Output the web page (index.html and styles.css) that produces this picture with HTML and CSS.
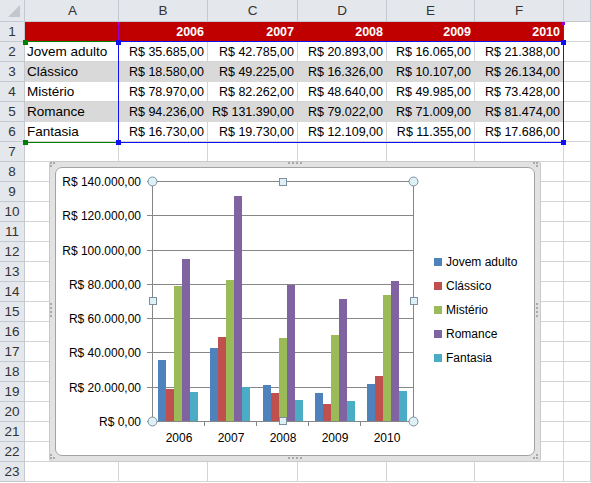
FILE: index.html
```html
<!DOCTYPE html>
<html lang="pt-BR">
<head>
<meta charset="utf-8">
<title>Vendas por gênero</title>
<link rel="stylesheet" href="styles.css">
</head>
<body>
<div class="sheet">
  <div class="row head">
    <div class="corner"><span class="tri"></span></div>
    <div class="ch ca">A</div><div class="ch cb">B</div><div class="ch cc">C</div><div class="ch cd">D</div><div class="ch ce">E</div><div class="ch cf">F</div><div class="ch cg"></div>
  </div>
  <div class="row">
    <div class="rh">1</div>
    <div class="cell ca red"></div><div class="cell cb red yr">2006</div><div class="cell cc red yr">2007</div><div class="cell cd red yr">2008</div><div class="cell ce red yr">2009</div><div class="cell cf red yr">2010</div><div class="cell cg"></div>
  </div>
  <div class="row">
    <div class="rh">2</div>
    <div class="cell ca">Jovem adulto</div><div class="cell cb num">R$ 35.685,00</div><div class="cell cc num">R$ 42.785,00</div><div class="cell cd num">R$ 20.893,00</div><div class="cell ce num">R$ 16.065,00</div><div class="cell cf num">R$ 21.388,00</div><div class="cell cg"></div>
  </div>
  <div class="row band">
    <div class="rh">3</div>
    <div class="cell ca">Clássico</div><div class="cell cb num">R$ 18.580,00</div><div class="cell cc num">R$ 49.225,00</div><div class="cell cd num">R$ 16.326,00</div><div class="cell ce num">R$ 10.107,00</div><div class="cell cf num">R$ 26.134,00</div><div class="cell cg"></div>
  </div>
  <div class="row">
    <div class="rh">4</div>
    <div class="cell ca">Mistério</div><div class="cell cb num">R$ 78.970,00</div><div class="cell cc num">R$ 82.262,00</div><div class="cell cd num">R$ 48.640,00</div><div class="cell ce num">R$ 49.985,00</div><div class="cell cf num">R$ 73.428,00</div><div class="cell cg"></div>
  </div>
  <div class="row band">
    <div class="rh">5</div>
    <div class="cell ca">Romance</div><div class="cell cb num">R$ 94.236,00</div><div class="cell cc num">R$ 131.390,00</div><div class="cell cd num">R$ 79.022,00</div><div class="cell ce num">R$ 71.009,00</div><div class="cell cf num">R$ 81.474,00</div><div class="cell cg"></div>
  </div>
  <div class="row">
    <div class="rh">6</div>
    <div class="cell ca">Fantasia</div><div class="cell cb num">R$ 16.730,00</div><div class="cell cc num">R$ 19.730,00</div><div class="cell cd num">R$ 12.109,00</div><div class="cell ce num">R$ 11.355,00</div><div class="cell cf num">R$ 17.686,00</div><div class="cell cg"></div>
  </div>
  <div class="row"><div class="rh">7</div><div class="cell ca"></div><div class="cell cb"></div><div class="cell cc"></div><div class="cell cd"></div><div class="cell ce"></div><div class="cell cf"></div><div class="cell cg"></div></div>
  <div class="row"><div class="rh">8</div><div class="cell ca"></div><div class="cell cb"></div><div class="cell cc"></div><div class="cell cd"></div><div class="cell ce"></div><div class="cell cf"></div><div class="cell cg"></div></div>
  <div class="row"><div class="rh">9</div><div class="cell ca"></div><div class="cell cb"></div><div class="cell cc"></div><div class="cell cd"></div><div class="cell ce"></div><div class="cell cf"></div><div class="cell cg"></div></div>
  <div class="row"><div class="rh">10</div><div class="cell ca"></div><div class="cell cb"></div><div class="cell cc"></div><div class="cell cd"></div><div class="cell ce"></div><div class="cell cf"></div><div class="cell cg"></div></div>
  <div class="row"><div class="rh">11</div><div class="cell ca"></div><div class="cell cb"></div><div class="cell cc"></div><div class="cell cd"></div><div class="cell ce"></div><div class="cell cf"></div><div class="cell cg"></div></div>
  <div class="row"><div class="rh">12</div><div class="cell ca"></div><div class="cell cb"></div><div class="cell cc"></div><div class="cell cd"></div><div class="cell ce"></div><div class="cell cf"></div><div class="cell cg"></div></div>
  <div class="row"><div class="rh">13</div><div class="cell ca"></div><div class="cell cb"></div><div class="cell cc"></div><div class="cell cd"></div><div class="cell ce"></div><div class="cell cf"></div><div class="cell cg"></div></div>
  <div class="row"><div class="rh">14</div><div class="cell ca"></div><div class="cell cb"></div><div class="cell cc"></div><div class="cell cd"></div><div class="cell ce"></div><div class="cell cf"></div><div class="cell cg"></div></div>
  <div class="row"><div class="rh">15</div><div class="cell ca"></div><div class="cell cb"></div><div class="cell cc"></div><div class="cell cd"></div><div class="cell ce"></div><div class="cell cf"></div><div class="cell cg"></div></div>
  <div class="row"><div class="rh">16</div><div class="cell ca"></div><div class="cell cb"></div><div class="cell cc"></div><div class="cell cd"></div><div class="cell ce"></div><div class="cell cf"></div><div class="cell cg"></div></div>
  <div class="row"><div class="rh">17</div><div class="cell ca"></div><div class="cell cb"></div><div class="cell cc"></div><div class="cell cd"></div><div class="cell ce"></div><div class="cell cf"></div><div class="cell cg"></div></div>
  <div class="row"><div class="rh">18</div><div class="cell ca"></div><div class="cell cb"></div><div class="cell cc"></div><div class="cell cd"></div><div class="cell ce"></div><div class="cell cf"></div><div class="cell cg"></div></div>
  <div class="row"><div class="rh">19</div><div class="cell ca"></div><div class="cell cb"></div><div class="cell cc"></div><div class="cell cd"></div><div class="cell ce"></div><div class="cell cf"></div><div class="cell cg"></div></div>
  <div class="row"><div class="rh">20</div><div class="cell ca"></div><div class="cell cb"></div><div class="cell cc"></div><div class="cell cd"></div><div class="cell ce"></div><div class="cell cf"></div><div class="cell cg"></div></div>
  <div class="row"><div class="rh">21</div><div class="cell ca"></div><div class="cell cb"></div><div class="cell cc"></div><div class="cell cd"></div><div class="cell ce"></div><div class="cell cf"></div><div class="cell cg"></div></div>
  <div class="row"><div class="rh">22</div><div class="cell ca"></div><div class="cell cb"></div><div class="cell cc"></div><div class="cell cd"></div><div class="cell ce"></div><div class="cell cf"></div><div class="cell cg"></div></div>
  <div class="row"><div class="rh">23</div><div class="cell ca"></div><div class="cell cb"></div><div class="cell cc"></div><div class="cell cd"></div><div class="cell ce"></div><div class="cell cf"></div><div class="cell cg"></div></div>
</div>

<!-- range highlights of the selected chart -->
<div class="hl-cat"></div>
<div class="hl-ser hl-ser-l"></div>
<div class="hl-ser hl-ser-r"></div>
<div class="hl-val"></div>
<span class="hnd hnd-g" style="left:23px;top:40px"></span>
<span class="hnd hnd-g" style="left:23px;top:140px"></span>
<span class="hnd hnd-b" style="left:116px;top:40px"></span>
<span class="hnd hnd-b" style="left:561px;top:40px"></span>
<span class="hnd hnd-b" style="left:116px;top:140px"></span>
<span class="hnd hnd-b" style="left:561px;top:140px"></span>
<span class="hnd hnd-p" style="left:117px;top:22px"></span>
<span class="hnd hnd-p" style="left:562px;top:22px"></span>

<div class="chart">
  <div class="chart-inner"></div>
  <svg class="chart-svg" width="492" height="301" viewBox="0 0 492 301">
    <g transform="translate(-50,-162)">
      <!-- frame grips -->
      <g fill="#a9a9a9">
        <rect x="289" y="163" width="2" height="2"/><rect x="293" y="163" width="2" height="2"/><rect x="297" y="163" width="2" height="2"/><rect x="301" y="163" width="2" height="2"/>
        <rect x="289" y="458" width="2" height="2"/><rect x="293" y="458" width="2" height="2"/><rect x="297" y="458" width="2" height="2"/><rect x="301" y="458" width="2" height="2"/>
        <rect x="51" y="304" width="2" height="2"/><rect x="51" y="308" width="2" height="2"/><rect x="51" y="312" width="2" height="2"/><rect x="51" y="316" width="2" height="2"/>
        <rect x="537" y="304" width="2" height="2"/><rect x="537" y="308" width="2" height="2"/><rect x="537" y="312" width="2" height="2"/><rect x="537" y="316" width="2" height="2"/>
        <rect x="51" y="163" width="2" height="2"/><rect x="54" y="163" width="2" height="2"/><rect x="51" y="166" width="2" height="2"/>
        <rect x="534" y="163" width="2" height="2"/><rect x="537" y="163" width="2" height="2"/><rect x="537" y="166" width="2" height="2"/>
        <rect x="51" y="455" width="2" height="2"/><rect x="51" y="458" width="2" height="2"/><rect x="54" y="458" width="2" height="2"/>
        <rect x="537" y="455" width="2" height="2"/><rect x="534" y="458" width="2" height="2"/><rect x="537" y="458" width="2" height="2"/>
      </g>
      <!-- gridlines -->
      <g stroke="#878787" stroke-width="1" shape-rendering="crispEdges">
        <line x1="148" y1="182.5" x2="414" y2="182.5"/>
        <line x1="148" y1="216.5" x2="414" y2="216.5"/>
        <line x1="148" y1="251.5" x2="414" y2="251.5"/>
        <line x1="148" y1="285.5" x2="414" y2="285.5"/>
        <line x1="148" y1="319.5" x2="414" y2="319.5"/>
        <line x1="148" y1="353.5" x2="414" y2="353.5"/>
        <line x1="148" y1="388.5" x2="414" y2="388.5"/>
      </g>
      <!-- bars -->
      <g fill="#4f81bd">
        <rect x="159" y="361" width="8" height="61"/><rect x="211" y="349" width="8" height="73"/><rect x="264" y="386" width="8" height="36"/><rect x="316" y="394" width="8" height="28"/><rect x="368" y="385" width="8" height="37"/>
      </g>
      <g fill="#c0504d">
        <rect x="167" y="390" width="8" height="32"/><rect x="219" y="338" width="8" height="84"/><rect x="272" y="394" width="8" height="28"/><rect x="324" y="405" width="8" height="17"/><rect x="376" y="377" width="8" height="45"/>
      </g>
      <g fill="#9bbb59">
        <rect x="175" y="287" width="8" height="135"/><rect x="227" y="281" width="8" height="141"/><rect x="280" y="339" width="8" height="83"/><rect x="332" y="336" width="8" height="86"/><rect x="384" y="296" width="8" height="126"/>
      </g>
      <g fill="#8064a2">
        <rect x="183" y="260" width="8" height="162"/><rect x="235" y="197" width="8" height="225"/><rect x="288" y="286" width="8" height="136"/><rect x="340" y="300" width="8" height="122"/><rect x="392" y="282" width="8" height="140"/>
      </g>
      <g fill="#4bacc6">
        <rect x="191" y="393" width="8" height="29"/><rect x="243" y="388" width="8" height="34"/><rect x="296" y="401" width="8" height="21"/><rect x="348" y="402" width="8" height="20"/><rect x="400" y="392" width="8" height="30"/>
      </g>
      <!-- axes -->
      <g stroke="#868686" stroke-width="1" shape-rendering="crispEdges">
        <line x1="148" y1="422.5" x2="414" y2="422.5"/>
        <line x1="153.5" y1="182" x2="153.5" y2="427"/>
        <line x1="414.5" y1="182" x2="414.5" y2="427"/>
        <line x1="205.5" y1="422" x2="205.5" y2="427"/>
        <line x1="257.5" y1="422" x2="257.5" y2="427"/>
        <line x1="309.5" y1="422" x2="309.5" y2="427"/>
        <line x1="361.5" y1="422" x2="361.5" y2="427"/>
      </g>
      <!-- y labels -->
      <g class="ax" text-anchor="end">
        <text x="142" y="187">R$ 140.000,00</text>
        <text x="142" y="221">R$ 120.000,00</text>
        <text x="142" y="256">R$ 100.000,00</text>
        <text x="142" y="290">R$ 80.000,00</text>
        <text x="142" y="324">R$ 60.000,00</text>
        <text x="142" y="358">R$ 40.000,00</text>
        <text x="142" y="393">R$ 20.000,00</text>
        <text x="142" y="427">R$ 0,00</text>
      </g>
      <!-- x labels -->
      <g class="ax" text-anchor="middle">
        <text x="180" y="443">2006</text>
        <text x="232" y="443">2007</text>
        <text x="284" y="443">2008</text>
        <text x="336" y="443">2009</text>
        <text x="388" y="443">2010</text>
      </g>
      <!-- legend -->
      <g class="ax">
        <rect x="435" y="259" width="8" height="8" fill="#4f81bd"/><text x="447" y="267">Jovem adulto</text>
        <rect x="435" y="283" width="8" height="8" fill="#c0504d"/><text x="447" y="291">Clássico</text>
        <rect x="435" y="307" width="8" height="8" fill="#9bbb59"/><text x="447" y="315">Mistério</text>
        <rect x="435" y="331" width="8" height="8" fill="#8064a2"/><text x="447" y="339">Romance</text>
        <rect x="435" y="355" width="8" height="8" fill="#4bacc6"/><text x="447" y="363">Fantasia</text>
      </g>
      <!-- plot area handles -->
      <g fill="#dcf0f6" stroke="#7f909c" stroke-width="1">
        <circle cx="153.5" cy="182.5" r="4.5"/>
        <circle cx="414.5" cy="182.5" r="4.5"/>
        <circle cx="153.5" cy="422.5" r="4.5"/>
        <circle cx="414.5" cy="422.5" r="4.5"/>
        <rect x="280.5" y="179.5" width="7" height="7"/>
        <rect x="280.5" y="418.5" width="7" height="7"/>
        <rect x="150.5" y="298.5" width="7" height="7"/>
        <rect x="411.5" y="298.5" width="7" height="7"/>
      </g>
    </g>
  </svg>
</div>
</body>
</html>
```

FILE: styles.css
```css
html, body {
  margin: 0;
  padding: 0;
  background: #fff;
}

body {
  width: 591px;
  height: 483px;
  overflow: hidden;
  position: relative;
  font-family: "Liberation Sans", Arial, sans-serif;
  font-size: 12.5px;
  color: #000;
}

.sheet {
  display: flex;
  flex-direction: column;
  width: 591px;
}

.row {
  display: flex;
  height: 20px;
  flex: none;
}

.row.head {
  height: 22px;
}

.corner,
.ch,
.rh,
.cell {
  box-sizing: border-box;
  flex: none;
}

.corner {
  width: 25px;
  background: #e4e7ec;
  border-right: 1px solid #c4c9d0;
  border-bottom: 1px solid #c4c9d0;
  position: relative;
}

.tri {
  position: absolute;
  right: 4px;
  bottom: 4px;
  width: 12px;
  height: 12px;
  background: #c3c7cc;
  clip-path: polygon(100% 0, 100% 100%, 0 100%);
}

.ch {
  background: #e4e7ec;
  border-right: 1px solid #c4c9d0;
  border-bottom: 1px solid #c4c9d0;
  color: #333;
  font-size: 13.5px;
  text-align: center;
  line-height: 21px;
}

.rh {
  width: 25px;
  background: #e4e7ec;
  border-right: 1px solid #c4c9d0;
  border-bottom: 1px solid #c4c9d0;
  color: #333;
  font-size: 13.5px;
  text-align: center;
  line-height: 20px;
}

.cell {
  border-right: 1px solid #d4d4d4;
  border-bottom: 1px solid #d4d4d4;
  line-height: 20px;
  white-space: nowrap;
  overflow: hidden;
}

.ca { width: 94px; padding-left: 2px; font-size: 13.5px; }
.cb { width: 89px; }
.cc { width: 90px; }
.cd { width: 89px; }
.ce { width: 88px; }
.cf { width: 89px; }
.cg { flex: 1 1 auto; }

.num {
  text-align: right;
  padding-right: 3px;
}

.red {
  background: #c00000;
  border-color: #c00000;
}

.yr {
  color: #fff;
  font-weight: bold;
  text-align: right;
  padding-right: 3px;
}

.band .cell:not(.cg) {
  background: #d9d9d9;
  border-color: #d9d9d9;
}

/* highlighted source ranges */
.hl-val {
  position: absolute;
  left: 118px;
  top: 41px;
  width: 446px;
  height: 102px;
  box-sizing: border-box;
  border: 1px solid #1010f0;
}

.hl-cat {
  position: absolute;
  left: 25px;
  top: 41px;
  width: 94px;
  height: 102px;
  box-sizing: border-box;
  border-top: 1px solid #008000;
  border-bottom: 1px solid #008000;
}

.hl-ser {
  position: absolute;
  top: 22px;
  width: 1px;
  height: 20px;
  background: #9400d3;
}

.hl-ser-l { left: 118px; }
.hl-ser-r { left: 563px; }

.hnd {
  position: absolute;
  width: 5px;
  height: 5px;
}

.hnd-b { background: #1010f0; }
.hnd-g { background: #008000; }
.hnd-p { width: 3px; height: 3px; background: #9400d3; }

/* chart object */
.chart {
  position: absolute;
  left: 49px;
  top: 161px;
  width: 492px;
  height: 301px;
  box-sizing: border-box;
  border: 1px solid #c9c9c9;
  border-radius: 3px;
  background: #e2e2e2;
  padding: 5px;
}

.chart-inner {
  width: 100%;
  height: 100%;
  box-sizing: border-box;
  background: #fff;
  border: 1px solid #a3a3a3;
  border-radius: 7px;
}

.chart-svg {
  position: absolute;
  left: -1px;
  top: -1px;
  overflow: visible;
}

.ax {
  font-family: "Liberation Sans", Arial, sans-serif;
  font-size: 12px;
  fill: #000;
}
```
